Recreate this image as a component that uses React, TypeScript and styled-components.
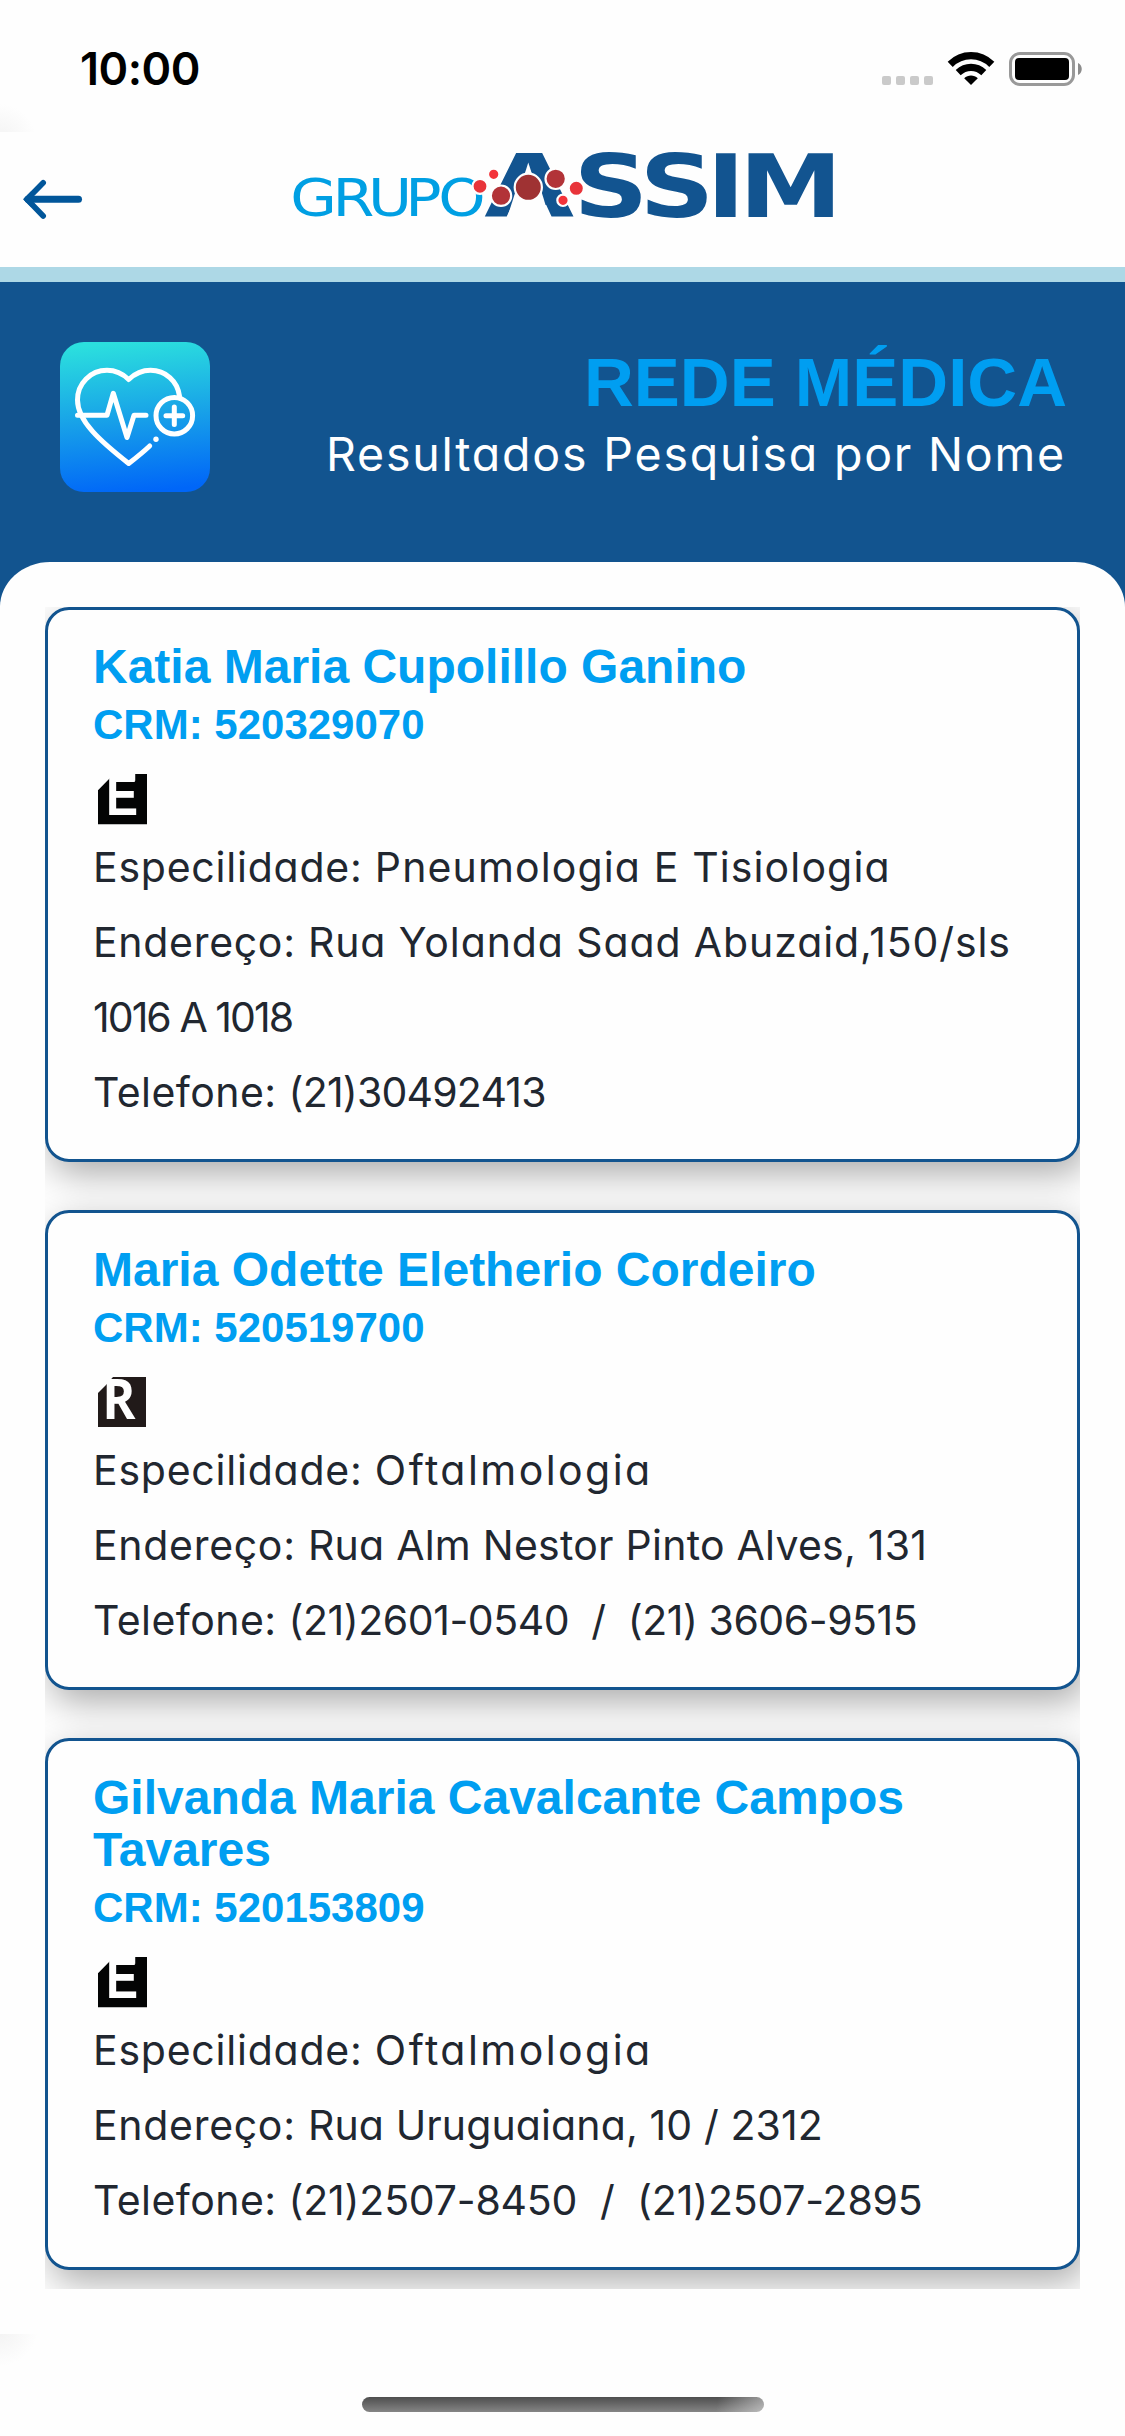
import React from "react";
import styled, { createGlobalStyle } from "styled-components";

const colors = {
  page: "#fefefe",
  navy: "#12548f",
  sky: "#009ef1",
  rule: "#add8e6",
  ink: "#212730",
};

const GlobalStyle = createGlobalStyle`
  * { box-sizing: border-box; }
  body { margin: 0; background: ${colors.page}; }
  svg { display: block; overflow: visible; }
`;

const Screen = styled.div`
  display: flex;
  flex-direction: column;
  width: 1125px;
  height: 2436px;
  overflow: hidden;
  background: ${colors.page};
  font-family: "Inter", "Liberation Sans", sans-serif;
`;

const StatusBar = styled.header`
  display: flex;
  align-items: flex-start;
  justify-content: space-between;
  height: 132px;
  padding: 0 42px 0 80px;
  background: radial-gradient(circle at 0 140px, #f3f3f3 0, ${colors.page} 36px);
`;

const Clock = styled.time`
  padding-top: 42px;
  font-size: 45px;
  line-height: 54px;
  font-weight: 600;
  letter-spacing: -0.5px;
  color: #000;
`;

const StatusIcons = styled.div`
  display: flex;
  gap: 14px;
  padding-top: 52px;
`;

const TopBar = styled.nav`
  display: flex;
  align-items: flex-start;
  height: 150px;
  border-bottom: 15px solid ${colors.rule};
`;

const BackButton = styled.button`
  display: flex;
  margin: 44px 0 0 20px;
  padding: 0;
  border: 0;
  background: none;
`;

const LogoMark = styled.svg`
  margin: 8px 0 0 195px;
`;

const Hero = styled.section`
  display: flex;
  flex-direction: column;
  justify-content: space-between;
  height: 325px;
  background: ${colors.navy};
`;

const HeroContent = styled.div`
  display: flex;
  justify-content: space-between;
  padding: 60px 60px 0;
`;

const HeroText = styled.div`
  display: flex;
  flex-direction: column;
  align-items: flex-end;
`;

const Title = styled.h1`
  margin: 3px -2px 0 0;
  font-family: "Liberation Sans", sans-serif;
  font-size: 69px;
  line-height: 76px;
  font-weight: 700;
  letter-spacing: 0;
  color: ${colors.sky};
`;

const Subtitle = styled.p`
  margin: 0 -1px 0 0;
  font-size: 46.5px;
  line-height: 66px;
  font-weight: 400;
  font-feature-settings: "cv11";
  letter-spacing: 1.8px;
  color: #fff;
`;

const SheetEdge = styled.div`
  height: 45px;
  border-radius: 58px 58px 0 0 / 52px 52px 0 0;
  background: ${colors.page};
`;

const ResultList = styled.main`
  display: flex;
  flex-direction: column;
  gap: 48px;
  width: 1035px;
  height: 1682px;
  margin: 0 45px;
  overflow: hidden;
`;

const Card = styled.article`
  flex: none;
  padding: 31px 42px 29px 45px;
  border: 3px solid ${colors.navy};
  border-radius: 24px;
  background: ${colors.page};
  box-shadow: 6px 12px 36px rgba(0, 0, 0, 0.33);
`;

const DoctorName = styled.h2`
  margin: 0;
  font-family: "Liberation Sans", sans-serif;
  font-size: 48px;
  line-height: 52px;
  font-weight: 700;
  white-space: pre-line;
  color: ${colors.sky};
`;

const Crm = styled.p`
  margin: 6px 0 0;
  font-family: "Liberation Sans", sans-serif;
  font-size: 42px;
  line-height: 52px;
  font-weight: 700;
  color: ${colors.sky};
`;

const BadgeRow = styled.div`
  display: flex;
  height: 79px;
  padding: 23px 0 0 5px;
`;

const Detail = styled.p`
  margin: 0;
  font-size: 41px;
  line-height: 75px;
  font-weight: 400;
  font-feature-settings: "cv11";
  white-space: pre;
  color: ${colors.ink};
`;

const Spaced = styled.span<{ $track: number }>`
  letter-spacing: ${(p) => p.$track}px;
`;

const BottomArea = styled.footer`
  display: flex;
  justify-content: center;
  align-items: flex-start;
  height: 102px;
  margin-top: auto;
  padding-top: 63px;
  background: radial-gradient(circle at 0 -6px, #f2f2f2 0, ${colors.page} 38px);
`;

const HomeIndicator = styled.div`
  width: 402px;
  height: 15px;
  border-radius: 8px;
  background:
    linear-gradient(100deg, transparent 88%, rgba(255, 255, 255, 0.45) 100%),
    linear-gradient(#4e4e4e, #858585);
`;

function Signal() {
  return (
    <svg width="51" height="34" viewBox="0 0 51 34">
      {[0, 14, 28, 42].map((x) => (
        <rect key={x} x={x} y="24" width="9" height="9" rx="2" fill="#cacaca" />
      ))}
    </svg>
  );
}

function Wifi() {
  return (
    <svg width="48" height="34" viewBox="0 0 48 34">
      <g fill="none" stroke="#000" strokeWidth="7.2">
        <path d="M3.2 12.4C15 .8 33 .8 44.8 12.4" />
        <path d="M11.2 20.6C18.6 13.6 29.4 13.6 36.8 20.6" />
      </g>
      <path d="M24 33 17.2 26.2C21 22.6 27 22.6 30.8 26.2Z" fill="#000" />
    </svg>
  );
}

function Battery() {
  return (
    <svg width="74" height="34" viewBox="0 0 74 34">
      <rect x="1.5" y="1.5" width="63" height="31" rx="9.5" fill="none" stroke="#999" strokeWidth="3" />
      <rect x="6" y="6" width="54" height="22" rx="4" fill="#000" />
      <path d="M69 11c5 2 5 10 0 12Z" fill="#8c8c8c" />
    </svg>
  );
}

function BackArrow() {
  return (
    <svg width="65" height="46" viewBox="20 176 65 46" fill="none" stroke="#01569a" strokeLinecap="round">
      <path d="M28 199.3H78.5" strokeWidth="7" />
      <path d="M43.2 182.8 27 199.3 43.2 216" strokeWidth="5.6" strokeLinejoin="round" />
      <path d="M23 199.3 31 191.5V207Z" fill="#01569a" stroke="none" />
    </svg>
  );
}

const molecules: [number, number, number, string][] = [
  [480, 186.3, 6.5, "#e8343a"],
  [493.7, 174.3, 4.7, "#f3333a"],
  [501, 195.7, 9.2, "#b23338"],
  [528.3, 187.3, 12.6, "#9f3233"],
  [555.7, 178.8, 9.2, "#b23338"],
  [563, 200.3, 4.7, "#f3333a"],
  [576.3, 188.3, 6.6, "#e8343a"],
];

function Logo() {
  return (
    <LogoMark width="560" height="92" viewBox="280 140 560 92">
      <g fontFamily='"DejaVu Sans", sans-serif'>
        <text
          transform="translate(1 216.3) scale(1.17 1)"
          x="247.3 283.4 313.6 345.6 373.8"
          fontSize="51.5"
          fill="#009fe3"
        >
          GRUPO
        </text>
        <g fontWeight="700" fill="#125490" fontSize="87.3">
          <text transform="translate(484.2 216.6) scale(1.33 1)">A</text>
          <text transform="translate(0 216.6) scale(1.19 1)" x="482 537.4 593.8 621">
            SSIM
          </text>
        </g>
      </g>
      <path d="M507 218 516 190H541L549.5 218Z" fill={colors.page} />
      <path d="M524 176 528.3 162.5 532.6 176Z" fill={colors.page} />
      {molecules.map(([cx, cy, r, fill]) => (
        <circle key={cx} cx={cx} cy={cy} r={r + 1} fill={fill} stroke={colors.page} strokeWidth="2.2" />
      ))}
    </LogoMark>
  );
}

function HeartIcon() {
  return (
    <svg width="150" height="150" viewBox="0 0 150 150">
      <defs>
        <linearGradient id="tile" x1="0.45" y1="0" x2="0.55" y2="1">
          <stop offset="0" stopColor="#2bdfde" />
          <stop offset="0.5" stopColor="#18a2e8" />
          <stop offset="1" stopColor="#0066f8" />
        </linearGradient>
      </defs>
      <rect width="150" height="150" rx="24" fill="url(#tile)" />
      <g fill="none" stroke="#fff" strokeWidth="5" strokeLinecap="round" strokeLinejoin="round">
        <path d="M119.5 54C117.5 39 105.5 28.3 90.5 28.3C82 28.3 74.5 32 68.7 37.5C63 32 55.5 28.3 47 28.3C30.5 28.3 17.5 41.5 17.5 58C17.5 79 40 99 68.7 121.5C76.5 115.5 83.5 109.8 89.7 104" />
        <path d="M17.5 73.3H47L53.3 51.3L67 95.5L74 73.3H86" />
        <circle cx="114.3" cy="73.7" r="18.3" />
        <path d="M106 73.7H122.7M114.3 65V82.5" />
      </g>
      <circle cx="96" cy="97.3" r="2.7" fill="#fff" />
    </svg>
  );
}

type BadgeKind = "E" | "R";

function Badge({ kind }: { kind: BadgeKind }) {
  if (kind === "E") {
    return (
      <svg width="49" height="51" viewBox="0 0 49 51">
        <path d="M0 16.3 12 4V8H36.8V0H49V50.3H0Z" fill="#030404" />
        <text
          transform="translate(8 41.3) scale(0.8 1)"
          fontFamily='"Liberation Sans", sans-serif'
          fontWeight="700"
          fontSize="60"
          fill="#fefefe"
        >
          E
        </text>
      </svg>
    );
  }
  return (
    <svg width="49" height="51" viewBox="0 0 49 51">
      <path d="M0 16 8 8 15 0H48V50H0Z" fill="#211a19" />
      <text
        transform="translate(4.2 41.8) scale(0.9 1)"
        fontFamily='"Open Sans", sans-serif'
        fontWeight="700"
        fontSize="56"
        fill="#fefefe"
      >
        R
      </text>
    </svg>
  );
}

type Line = { label?: string; labelTrack?: number; value: string; track: number };
type Doctor = { name: string; crm: string; badge: BadgeKind; lines: Line[] };

const specialty = { label: "Especilidade: ", labelTrack: 0.77 };
const address = { label: "Endereço: ", labelTrack: 0.7 };
const phone = { label: "Telefone: ", labelTrack: 0.45 };

const doctors: Doctor[] = [
  {
    name: "Katia Maria Cupolillo Ganino",
    crm: "520329070",
    badge: "E",
    lines: [
      { ...specialty, value: "Pneumologia E Tisiologia", track: 1.13 },
      { ...address, value: "Rua Yolanda Saad Abuzaid,150/sls", track: 0.9 },
      { value: "1016 A 1018", track: -1.95 },
      { ...phone, value: "(21)30492413", track: -0.8 },
    ],
  },
  {
    name: "Maria Odette Eletherio Cordeiro",
    crm: "520519700",
    badge: "R",
    lines: [
      { ...specialty, value: "Oftalmologia", track: 2.45 },
      { ...address, value: "Rua Alm Nestor Pinto Alves, 131", track: 0.25 },
      { ...phone, value: "(21)2601-0540  /  (21) 3606-9515", track: -0.46 },
    ],
  },
  {
    name: "Gilvanda Maria Cavalcante Campos\nTavares",
    crm: "520153809",
    badge: "E",
    lines: [
      { ...specialty, value: "Oftalmologia", track: 2.45 },
      { ...address, value: "Rua Uruguaiana, 10 / 2312", track: 0.12 },
      { ...phone, value: "(21)2507-8450  /  (21)2507-2895", track: -0.2 },
    ],
  },
];

function DoctorCard({ doctor }: { doctor: Doctor }) {
  return (
    <Card>
      <DoctorName>{doctor.name}</DoctorName>
      <Crm>CRM: {doctor.crm}</Crm>
      <BadgeRow>
        <Badge kind={doctor.badge} />
      </BadgeRow>
      {doctor.lines.map((line) => (
        <Detail key={line.value}>
          {line.label && <Spaced $track={line.labelTrack ?? 0}>{line.label}</Spaced>}
          <Spaced $track={line.track}>{line.value}</Spaced>
        </Detail>
      ))}
    </Card>
  );
}

export default function App() {
  return (
    <>
      <GlobalStyle />
      <Screen>
        <StatusBar>
          <Clock>10:00</Clock>
          <StatusIcons>
            <Signal />
            <Wifi />
            <Battery />
          </StatusIcons>
        </StatusBar>
        <TopBar>
          <BackButton aria-label="Voltar">
            <BackArrow />
          </BackButton>
          <Logo />
        </TopBar>
        <Hero>
          <HeroContent>
            <HeartIcon />
            <HeroText>
              <Title>REDE MÉDICA</Title>
              <Subtitle>Resultados Pesquisa por Nome</Subtitle>
            </HeroText>
          </HeroContent>
          <SheetEdge />
        </Hero>
        <ResultList>
          {doctors.map((doctor) => (
            <DoctorCard key={doctor.crm} doctor={doctor} />
          ))}
        </ResultList>
        <BottomArea>
          <HomeIndicator />
        </BottomArea>
      </Screen>
    </>
  );
}
